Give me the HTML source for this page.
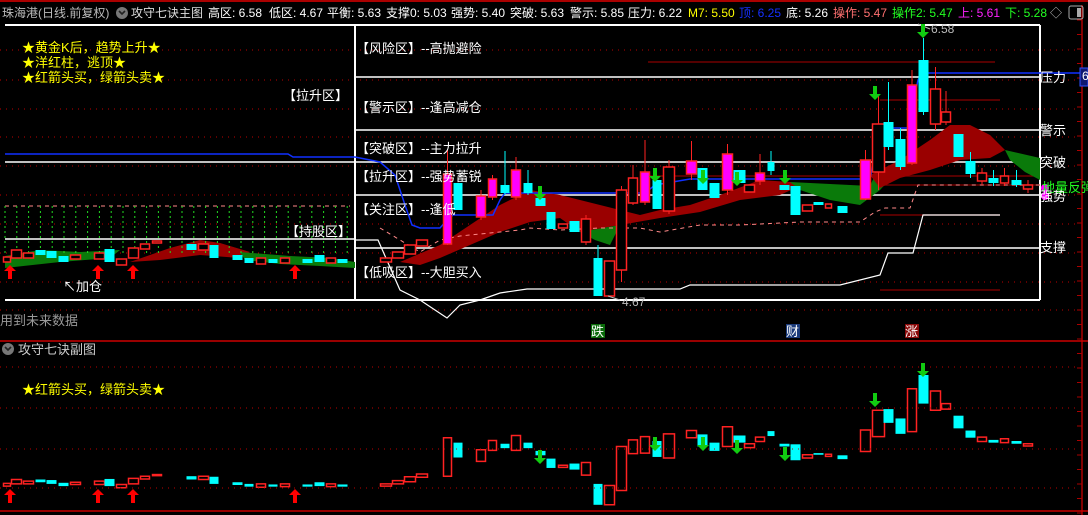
<!DOCTYPE html>
<html><head><meta charset="utf-8">
<style>
html,body{margin:0;padding:0;background:#000;}
body{width:1088px;height:515px;overflow:hidden;position:relative;font-family:"Liberation Sans","Noto Sans CJK SC",sans-serif;}
.t{position:absolute;white-space:nowrap;font-size:13px;line-height:15px;}
.h{font-size:12px;top:6px;}
svg{position:absolute;left:0;top:0;}
</style></head><body>
<svg id="s" width="1088" height="515" viewBox="0 0 1088 515">
<rect width="1088" height="515" fill="#000"/>
<line x1="0" y1="1" x2="1088" y2="1" stroke="#a00" stroke-width="2"/>
<g id="dots" stroke="#b00" stroke-dasharray="1 5" stroke-width="1"></g>
<g stroke="#fff" stroke-width="2">
<line x1="5" y1="25" x2="1040" y2="25"/>
<line x1="5" y1="300" x2="1040" y2="300"/>
<line x1="355" y1="25" x2="355" y2="300"/>
<line x1="1040" y1="25" x2="1040" y2="300"/>
</g>
<g stroke="#fff" stroke-width="1.5">
<line x1="355" y1="77" x2="1040" y2="77"/>
<line x1="355" y1="130" x2="1040" y2="130"/>
<line x1="355" y1="162" x2="1040" y2="162"/>
<line x1="355" y1="195" x2="1040" y2="195"/>
<line x1="355" y1="248" x2="1040" y2="248"/>
<line x1="5" y1="162" x2="355" y2="162"/>
<line x1="5" y1="239" x2="355" y2="239"/>
</g>
<g stroke="#800" stroke-width="1.2">
<line x1="648" y1="62" x2="995" y2="62"/>
<line x1="880" y1="100" x2="1000" y2="100"/>
<line x1="640" y1="176" x2="1040" y2="176"/>
<line x1="880" y1="185" x2="1040" y2="185"/>
<line x1="880" y1="215" x2="1000" y2="215"/>
<line x1="880" y1="290" x2="1000" y2="290"/>
</g>
<line x1="1082" y1="5" x2="1082" y2="515" stroke="#a00" stroke-width="1.5"/>
<g id="ticks" stroke="#a00"></g>
<polygon fill="#9a0000" points="400,262 440,245 470,225 500,205 530,190 560,195 600,205 640,215 660,210 690,205 720,195 760,180 790,182 800,186 780,195 740,200 700,212 660,218 620,225 580,232 560,218 530,222 500,232 470,245 440,258 420,265"/>
<polygon fill="#0a7a0a" points="580,232 620,225 610,245 595,240"/>
<polygon fill="#0a7a0a" points="790,182 870,186 875,175 900,168 880,190 860,205 830,200 800,190"/>
<polygon fill="#9a0000" points="870,175 900,160 930,140 950,125 970,125 990,135 1005,150 990,158 960,160 930,170 900,178 880,188"/>
<polygon fill="#0a7a0a" points="1005,150 1040,158 1040,180 1025,172 1010,160"/>
<polygon fill="#0a7a0a" points="5,256 40,250 80,252 120,250 110,258 60,262 5,268"/>
<polygon fill="#9a0000" points="130,262 170,248 200,240 220,243 250,252 240,258 200,255 160,260"/>
<polygon fill="#0a7a0a" points="240,252 290,256 330,258 355,262 355,268 320,266 280,264 245,260"/>
<line x1="5" y1="206" x2="350" y2="206" stroke="#f88" stroke-dasharray="4 4"/>
<g id="gv" stroke="#2d2" stroke-dasharray="2 3"></g>
<polyline fill="none" stroke="#f88" stroke-dasharray="4 4" points="380,228 400,240 420,252 440,240 460,236 490,233 520,230 530,228 560,230 600,228 640,228 660,232 700,225 740,225 800,222 860,222 875,212 885,208 910,208 918,185 1040,185"/>
<polyline fill="none" stroke="#fff" stroke-width="1.2" points="355,240 378,240 400,290 420,300 447,318 460,305 480,300 500,293 527,289 680,289 690,285 840,285 880,275 888,253 913,253 923,215 1000,215"/>
<polyline fill="none" stroke="#1030ff" stroke-width="1.5" points="5,154 288,154 293,157 355,157 380,162 395,175 405,205 412,225 420,228 440,228 447,220 453,215 493,215 500,200 505,193 645,193 655,185 690,179 870,179 878,140 882,128 908,128 918,80 922,73 1040,73"/>
<line x1="1040" y1="73" x2="1080" y2="73" stroke="#1030ff" stroke-width="1.5"/>
<rect x="1080" y="68" width="8" height="18" fill="#101870" stroke="#3050ff"/>
<g id="main"></g>
<g id="sub" transform="translate(0,342) scale(1,0.55)"></g>
<line x1="0" y1="341" x2="1088" y2="341" stroke="#c00" stroke-width="1.5"/>
<line x1="0" y1="511" x2="1088" y2="511" stroke="#c00" stroke-width="1.5"/>
<g id="dots2" stroke="#b00" stroke-dasharray="1 5"></g>
<circle cx="8" cy="349" r="6" fill="#777"/><path d="M5 347 L8 350 L11 347" stroke="#222" stroke-width="1.6" fill="none"/>
<circle cx="122" cy="13" r="6" fill="#777"/><path d="M119 11 L122 14 L125 11" stroke="#222" stroke-width="1.6" fill="none"/>
<rect x="1069" y="6" width="14" height="13" rx="2" fill="none" stroke="#aaa"/><rect x="1077" y="8" width="4" height="9" fill="#aaa"/>
<rect x="591" y="324" width="14" height="14" fill="#0a6a0a"/>
<rect x="786" y="324" width="14" height="14" fill="#1a3a7a"/>
<rect x="905" y="324" width="14" height="14" fill="#8a0a0a"/>
<circle cx="1045" cy="188" r="4" fill="#f0f"/><circle cx="1045" cy="196" r="4" fill="#f0f"/>
<line x1="918" y1="24" x2="930" y2="29" stroke="#bbb"/>
<line x1="608" y1="296" x2="620" y2="300" stroke="#bbb"/>
</svg>

<div class="t h" style="left:2px;color:#bbb">珠海港(日线.前复权)</div>
<div class="t h" style="left:131px;color:#ddd">攻守七诀主图</div>
<div class="t h" style="left:208px;color:#fff">高区: 6.58</div>
<div class="t h" style="left:269px;color:#fff">低区: 4.67</div>
<div class="t h" style="left:327px;color:#fff">平衡: 5.63</div>
<div class="t h" style="left:386px;color:#fff">支撑0: 5.03</div>
<div class="t h" style="left:451px;color:#fff">强势: 5.40</div>
<div class="t h" style="left:510px;color:#fff">突破: 5.63</div>
<div class="t h" style="left:570px;color:#fff">警示: 5.85</div>
<div class="t h" style="left:628px;color:#fff">压力: 6.22</div>
<div class="t h" style="left:688px;color:#ff0">M7: 5.50</div>
<div class="t h" style="left:739px;color:#1530ff">顶: 6.25</div>
<div class="t h" style="left:786px;color:#fff">底: 5.26</div>
<div class="t h" style="left:833px;color:#ff7070">操作: 5.47</div>
<div class="t h" style="left:892px;color:#2f2">操作2: 5.47</div>
<div class="t h" style="left:958px;color:#f2f">上: 5.61</div>
<div class="t h" style="left:1005px;color:#2f2">下: 5.28</div>
<div class="t h" style="left:1050px;color:#bbb">◇</div>

<div class="t" style="left:22px;top:40px;color:#ff0">★黄金K后，趋势上升★</div>
<div class="t" style="left:22px;top:55px;color:#ff0">★洋红柱，逃顶★</div>
<div class="t" style="left:22px;top:70px;color:#ff0">★红箭头买，绿箭头卖★</div>
<div class="t" style="left:283px;top:88px;color:#fff">【拉升区】</div>
<div class="t" style="left:286px;top:224px;color:#fff">【持股区】</div>
<div class="t" style="left:63px;top:279px;color:#fff">↖加仓</div>
<div class="t" style="left:0px;top:313px;color:#999">用到未来数据</div>

<div class="t" style="left:356px;top:41px;color:#fff">【风险区】--高抛避险</div>
<div class="t" style="left:356px;top:100px;color:#fff">【警示区】--逢高减仓</div>
<div class="t" style="left:356px;top:141px;color:#fff">【突破区】--主力拉升</div>
<div class="t" style="left:356px;top:169px;color:#fff">【拉升区】--强势蓄锐</div>
<div class="t" style="left:356px;top:202px;color:#fff">【关注区】--逢低</div>
<div class="t" style="left:356px;top:265px;color:#fff">【低吸区】--大胆买入</div>

<div class="t" style="left:1040px;top:70px;color:#fff">压力</div>
<div class="t" style="left:1040px;top:123px;color:#fff">警示</div>
<div class="t" style="left:1040px;top:155px;color:#fff">突破</div>
<div class="t" style="left:1042px;top:180px;color:#2f2">地量反弹</div>
<div class="t" style="left:1040px;top:189px;color:#fff">强势</div>
<div class="t" style="left:1040px;top:240px;color:#fff">支撑</div>
<div class="t" style="left:1082px;top:69px;color:#fff;font-size:12px">6</div>
<div class="t" style="left:931px;top:22px;color:#bbb;font-size:12px">6.58</div>
<div class="t" style="left:622px;top:295px;color:#bbb;font-size:12px">4.67</div>
<div class="t" style="left:591px;top:324px;color:#fff">跌</div>
<div class="t" style="left:786px;top:324px;color:#fff">财</div>
<div class="t" style="left:905px;top:324px;color:#fff">涨</div>

<div class="t" style="left:18px;top:342px;color:#ccc">攻守七诀副图</div>
<div class="t" style="left:22px;top:382px;color:#ff0">★红箭头买，绿箭头卖★</div>

<script>
var NS="http://www.w3.org/2000/svg";
function el(p,t,a){var e=document.createElementNS(NS,t);for(var k in a)e.setAttribute(k,a[k]);p.appendChild(e);return e;}
var d=document.getElementById('dots');
[50,80,109,137,166,195,224,253,282,310].forEach(function(y){el(d,'line',{x1:0,y1:y,x2:1080,y2:y});});
var d2=document.getElementById('dots2');
[367,408,449,488].forEach(function(y){el(d2,'line',{x1:0,y1:y,x2:1080,y2:y});});
var tk=document.getElementById('ticks');
for(var y=20;y<515;y+=14.5)el(tk,'line',{x1:1077,y1:y,x2:1082,y2:y});
var gv=document.getElementById('gv');
for(var x=5;x<350;x+=11.8)el(gv,'line',{x1:x,y1:206,x2:x,y2:255});
var C=[[3,11,257,262,'r'],[11,22,250,258,'r'],[23,34,253,258,'r'],[35,46,250,255,'c'],[46,57,251,258,'c'],[58,69,256,262,'c'],[70,81,255,259,'r'],[94,105,253,259,'r'],[104,115,249,262,'c'],[116,127,259,265,'r'],[128,139,248,258,'r'],[140,150,244,249,'r'],[152,162,241,243,'r'],[186,197,244,250,'c'],[198,209,244,250,'r'],[209,219,245,258,'c'],[232,243,255,260,'c'],[244,254,258,263,'c'],[256,266,258,264,'r'],[268,278,259,263,'c'],[280,290,258,263,'r'],[302,313,259,263,'c'],[314,325,255,262,'c'],[326,336,258,263,'r'],[337,348,259,263,'c'],
[380,392,258,262,'r'],[392,404,252,258,'r'],[404,416,245,254,'r'],[416,428,240,246,'r'],
[443,452,174,244,'m',150,245],[453,463,183,210,'c'],[476,486,196,217,'m',190,220],[488,497,179,197,'m',175,200],[500,510,185,193,'c',151,195],[511,521,170,197,'m',157,200],[523,533,183,193,'c',170,195],[535,546,198,206,'c'],[546,556,212,229,'c'],[558,568,224,228,'r'],[569,580,221,232,'c'],[581,591,219,242,'r',215,245],[593,603,258,296,'c',245,296],[604,615,261,296,'r'],[616,627,190,270,'r',186,282],[628,638,178,203,'r',165,205],[640,650,172,202,'m',140,205],[652,662,180,209,'c'],[663,675,167,211,'r',160,214],[686,697,161,174,'m',141,180],[697,708,168,190,'c'],[709,720,183,198,'c'],[722,733,154,190,'m',144,195],[733,746,170,183,'c'],[744,755,185,192,'r'],[755,765,173,181,'m',154,185],[767,775,162,171,'c',151,175],[779,790,185,190,'c'],[790,801,186,215,'c'],[802,813,205,211,'r'],[813,824,202,205,'c'],[825,832,204,208,'r'],[837,848,206,213,'c'],
[860,871,160,199,'m',150,200],[872,885,124,172,'r',95,190],[883,894,122,147,'c',82,150],[895,906,139,167,'c',128,170],[907,917,85,163,'m',70,165],[918,929,60,112,'c',38,115],[930,941,89,124,'r',67,130],[941,951,112,122,'r',91,125],[953,964,134,157,'c'],[965,976,161,174,'c',152,178],[977,987,173,181,'r',168,185],[988,999,178,183,'c',170,186],[1000,1009,176,183,'r',168,186],[1011,1022,180,185,'c',170,187],[1023,1033,185,189,'r',180,193]];
function draw(g,ns){C.forEach(function(c){var cx=(c[0]+c[1])/2,col=c[4]=='c'?'#0ff':'#f22';
 if(c[5]!==undefined&&!ns){el(g,'line',{x1:cx,y1:c[5],x2:cx,y2:c[6],stroke:col});}
 var a={x:c[0]+0.5,y:c[2],width:c[1]-c[0]-1,height:Math.max(c[3]-c[2],2)};
 if(c[4]=='c'){a.fill='#0ff';}else if(c[4]=='m'&&!ns){a.fill='#f0f';a.stroke='#f22';a['stroke-width']=1.5;}else{a.fill='#000';a.stroke='#f22';a['stroke-width']=1.5;}
 var r=el(g,'rect',a);if(ns)r.setAttribute('vector-effect','non-scaling-stroke');});}
draw(document.getElementById('main'),false);
draw(document.getElementById('sub'),true);
var s=document.getElementById('s');
function up(x,y){el(s,'polygon',{points:(x-6)+','+(y+6)+' '+x+','+y+' '+(x+6)+','+(y+6)+' '+(x+2)+','+(y+6)+' '+(x+2)+','+(y+14)+' '+(x-2)+','+(y+14)+' '+(x-2)+','+(y+6),fill:'#f00'});}
function dn(x,y){el(s,'polygon',{points:(x-2)+','+y+' '+(x+2)+','+y+' '+(x+2)+','+(y+8)+' '+(x+6)+','+(y+8)+' '+x+','+(y+14)+' '+(x-6)+','+(y+8)+' '+(x-2)+','+(y+8),fill:'#1c1'});}
[10,98,133,295].forEach(function(x){up(x,265);up(x,489);});
[[540,186],[655,168],[703,170],[737,172],[785,170],[875,86],[923,24]].forEach(function(p){dn(p[0],p[1]);});
[[540,450],[655,437],[703,437],[737,440],[785,447],[875,393],[923,363]].forEach(function(p){dn(p[0],p[1]);});
</script>
</body></html>
